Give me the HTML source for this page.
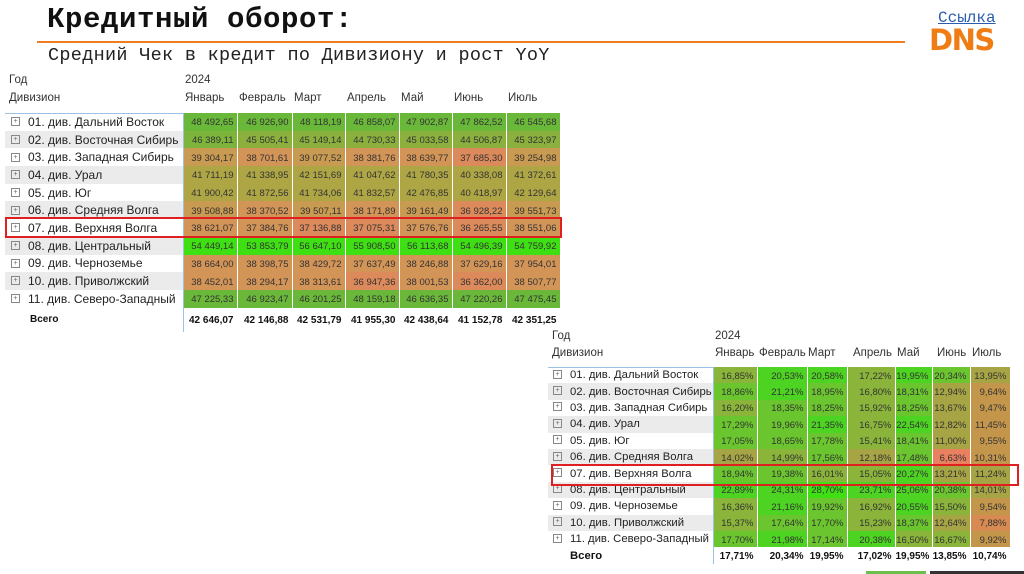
<!DOCTYPE html>
<html><head><meta charset="utf-8">
<style>
body{margin:0;width:1024px;height:574px;background:#fff;position:relative;overflow:hidden;font-family:"Liberation Sans","DejaVu Sans",sans-serif;color:#222}
.abs{position:absolute}
.t1{font-family:"Liberation Mono",monospace;font-weight:bold;font-size:29px;left:47px;top:3px;color:#111;letter-spacing:0.6px}
.t2{font-family:"Liberation Mono",monospace;font-size:18.5px;left:48px;top:45px;color:#222;letter-spacing:0.3px}
.line{left:37px;top:41px;width:868px;height:2px;background:#ef7d22}
.link{font-family:"Liberation Mono",monospace;font-size:16px;left:938px;top:9px;color:#2a5db0;text-decoration:underline}
.dns{left:929px;top:25px;font-weight:900;font-size:29px;color:#f07c14;letter-spacing:-1.5px;font-family:"DejaVu Sans",sans-serif;line-height:30px}
table{border-collapse:collapse;position:absolute;table-layout:fixed}
td{padding:0;white-space:nowrap;overflow:hidden}
.h td{font-size:11.5px;color:#333}
.lab{font-size:12px;color:#222;border-right:1px solid #9cc3e6}
.small .lab{font-size:11.3px}
.box{display:inline-block;width:7px;height:7px;border:1px solid #888;margin:0 8px 0 6px;vertical-align:middle;position:relative;top:-1px;font-size:7px;line-height:7px;text-align:center;color:#666}
.small .box{margin:0 8px 0 5px}
.g td.lab{background:#ebebeb}
.v{font-size:9.5px;color:#333;text-align:right;padding-right:3px;border-right:1px solid rgba(255,255,255,.25);padding-top:2px}
.tot td{font-weight:bold;font-size:10px;color:#111}
.A{background:#6ab83a}.B{background:#7db43c}.C{background:#8bb03e}.D{background:#aea645}.E{background:#c89a52}.F{background:#d39457}.G{background:#dc8a5b}.H{background:#3ee014}
.p1{background:#4dd322}.p2{background:#6bc52e}.p3{background:#8ab43a}.p4{background:#a6a444}.p5{background:#c3964b}.p6{background:#d78b52}.p7{background:#e9805f}
.red{border:2px solid #e02020;position:absolute}
</style></head><body>
<div class="abs t1">Кредитный оборот:</div>
<div class="abs line"></div>
<div class="abs t2">Средний Чек в кредит по Дивизиону и рост YoY</div>
<div class="abs link">Ссылка</div>
<div class="abs dns">DNS</div>

<table style="left:5px;top:71px;width:555px">
<colgroup><col style="width:178px"><col style="width:54px"><col style="width:55px"><col style="width:53px"><col style="width:54px"><col style="width:53px"><col style="width:54px"><col style="width:54px"></colgroup>
<tr class="h" style="height:18px"><td style="padding-left:4px">Год</td><td style="padding-left:2px">2024</td><td></td><td></td><td></td><td></td><td></td><td></td></tr>
<tr class="h" style="height:18px"><td style="padding-left:4px">Дивизион</td><td style="padding-left:2px">Январь</td><td style="padding-left:2px">Февраль</td><td style="padding-left:2px">Март</td><td style="padding-left:2px">Апрель</td><td style="padding-left:2px">Май</td><td style="padding-left:2px">Июнь</td><td style="padding-left:2px">Июль</td></tr>
<tr style="height:6px"><td style="border-bottom:1px solid #9cc3e6"></td><td colspan="7"></td></tr>
<tr style="height:17.7px"><td class="lab"><span class="box">+</span>01. див. Дальний Восток</td><td class="v A">48 492,65</td><td class="v A">46 926,90</td><td class="v A">48 118,19</td><td class="v A">46 858,07</td><td class="v A">47 902,87</td><td class="v A">47 862,52</td><td class="v A">46 545,68</td></tr>
<tr class="g" style="height:17.7px"><td class="lab"><span class="box">+</span>02. див. Восточная Сибирь</td><td class="v B">46 389,11</td><td class="v C">45 505,41</td><td class="v C">45 149,14</td><td class="v C">44 730,33</td><td class="v C">45 033,58</td><td class="v C">44 506,87</td><td class="v C">45 323,97</td></tr>
<tr style="height:17.7px"><td class="lab"><span class="box">+</span>03. див. Западная Сибирь</td><td class="v E">39 304,17</td><td class="v F">38 701,61</td><td class="v E">39 077,52</td><td class="v F">38 381,76</td><td class="v F">38 639,77</td><td class="v G">37 685,30</td><td class="v E">39 254,98</td></tr>
<tr class="g" style="height:17.7px"><td class="lab"><span class="box">+</span>04. див. Урал</td><td class="v D">41 711,19</td><td class="v D">41 338,95</td><td class="v D">42 151,69</td><td class="v D">41 047,62</td><td class="v D">41 780,35</td><td class="v D">40 338,08</td><td class="v D">41 372,61</td></tr>
<tr style="height:17.7px"><td class="lab"><span class="box">+</span>05. див. Юг</td><td class="v D">41 900,42</td><td class="v D">41 872,56</td><td class="v D">41 734,06</td><td class="v D">41 832,57</td><td class="v D">42 476,85</td><td class="v D">40 418,97</td><td class="v D">42 129,64</td></tr>
<tr class="g" style="height:17.7px"><td class="lab"><span class="box">+</span>06. див. Средняя Волга</td><td class="v E">39 508,88</td><td class="v F">38 370,52</td><td class="v E">39 507,11</td><td class="v F">38 171,89</td><td class="v E">39 161,49</td><td class="v G">36 928,22</td><td class="v E">39 551,73</td></tr>
<tr style="height:17.7px"><td class="lab"><span class="box">+</span>07. див. Верхняя Волга</td><td class="v F">38 621,07</td><td class="v F">37 384,76</td><td class="v G">37 136,88</td><td class="v G">37 075,31</td><td class="v F">37 576,76</td><td class="v G">36 265,55</td><td class="v F">38 551,06</td></tr>
<tr class="g" style="height:17.7px"><td class="lab"><span class="box">+</span>08. див. Центральный</td><td class="v H">54 449,14</td><td class="v H">53 853,79</td><td class="v H">56 647,10</td><td class="v H">55 908,50</td><td class="v H">56 113,68</td><td class="v H">54 496,39</td><td class="v H">54 759,92</td></tr>
<tr style="height:17.7px"><td class="lab"><span class="box">+</span>09. див. Черноземье</td><td class="v F">38 664,00</td><td class="v F">38 398,75</td><td class="v F">38 429,72</td><td class="v F">37 637,49</td><td class="v F">38 246,88</td><td class="v F">37 629,16</td><td class="v F">37 954,01</td></tr>
<tr class="g" style="height:17.7px"><td class="lab"><span class="box">+</span>10. див. Приволжский</td><td class="v F">38 452,01</td><td class="v F">38 294,17</td><td class="v F">38 313,61</td><td class="v G">36 947,36</td><td class="v F">38 001,53</td><td class="v G">36 362,00</td><td class="v F">38 507,77</td></tr>
<tr style="height:17.7px"><td class="lab"><span class="box">+</span>11. див. Северо-Западный</td><td class="v A">47 225,33</td><td class="v A">46 923,47</td><td class="v A">46 201,25</td><td class="v A">48 159,18</td><td class="v A">46 636,35</td><td class="v A">47 220,26</td><td class="v A">47 475,45</td></tr>
<tr class="tot" style="height:24px"><td class="lab" style="padding-left:25px;font-weight:bold">Всего</td><td class="v" style="color:#111">42 646,07</td><td class="v" style="color:#111">42 146,88</td><td class="v" style="color:#111">42 531,79</td><td class="v" style="color:#111">41 955,30</td><td class="v" style="color:#111">42 438,64</td><td class="v" style="color:#111">41 152,78</td><td class="v" style="color:#111">42 351,25</td></tr>
</table>
<div class="red" style="left:5px;top:217px;width:553px;height:17px"></div>

<table class="small" style="left:548px;top:327px;width:462px">
<colgroup><col style="width:165px"><col style="width:44px"><col style="width:50px"><col style="width:40px"><col style="width:48px"><col style="width:37px"><col style="width:38px"><col style="width:40px"></colgroup>
<tr class="h" style="height:17px"><td style="padding-left:4px">Год</td><td style="padding-left:2px">2024</td><td></td><td></td><td></td><td></td><td></td><td></td></tr>
<tr class="h" style="height:17px"><td style="padding-left:4px">Дивизион</td><td style="padding-left:2px">Январь</td><td style="padding-left:2px">Февраль</td><td style="padding-left:1px">Март</td><td style="padding-left:6px">Апрель</td><td style="padding-left:2px">Май</td><td style="padding-left:5px">Июнь</td><td style="padding-left:2px">Июль</td></tr>
<tr style="height:6px"><td style="border-bottom:1px solid #9cc3e6"></td><td colspan="7"></td></tr>
<tr style="height:16.4px"><td class="lab"><span class="box">+</span>01. див. Дальний Восток</td><td class="v p3">16,85%</td><td class="v p1">20,53%</td><td class="v p1">20,58%</td><td class="v p3">17,22%</td><td class="v p1">19,95%</td><td class="v p2">20,34%</td><td class="v p4">13,95%</td></tr>
<tr class="g" style="height:16.4px"><td class="lab"><span class="box">+</span>02. див. Восточная Сибирь</td><td class="v p2">18,86%</td><td class="v p1">21,21%</td><td class="v p2">18,95%</td><td class="v p3">16,80%</td><td class="v p2">18,31%</td><td class="v p4">12,94%</td><td class="v p5">9,64%</td></tr>
<tr style="height:16.4px"><td class="lab"><span class="box">+</span>03. див. Западная Сибирь</td><td class="v p3">16,20%</td><td class="v p2">18,35%</td><td class="v p2">18,25%</td><td class="v p3">15,92%</td><td class="v p2">18,25%</td><td class="v p4">13,67%</td><td class="v p5">9,47%</td></tr>
<tr class="g" style="height:16.4px"><td class="lab"><span class="box">+</span>04. див. Урал</td><td class="v p2">17,29%</td><td class="v p2">19,96%</td><td class="v p1">21,35%</td><td class="v p3">16,75%</td><td class="v p1">22,54%</td><td class="v p4">12,82%</td><td class="v p5">11,45%</td></tr>
<tr style="height:16.4px"><td class="lab"><span class="box">+</span>05. див. Юг</td><td class="v p2">17,05%</td><td class="v p2">18,65%</td><td class="v p2">17,78%</td><td class="v p3">15,41%</td><td class="v p2">18,41%</td><td class="v p4">11,00%</td><td class="v p5">9,55%</td></tr>
<tr class="g" style="height:16.4px"><td class="lab"><span class="box">+</span>06. див. Средняя Волга</td><td class="v p4">14,02%</td><td class="v p3">14,99%</td><td class="v p2">17,56%</td><td class="v p4">12,18%</td><td class="v p2">17,48%</td><td class="v p7">6,63%</td><td class="v p5">10,31%</td></tr>
<tr style="height:16.4px"><td class="lab"><span class="box">+</span>07. див. Верхняя Волга</td><td class="v p2">18,94%</td><td class="v p2">19,38%</td><td class="v p3">16,01%</td><td class="v p3">15,05%</td><td class="v p1">20,27%</td><td class="v p4">13,21%</td><td class="v p4">11,24%</td></tr>
<tr class="g" style="height:16.4px"><td class="lab"><span class="box">+</span>08. див. Центральный</td><td class="v p1">22,89%</td><td class="v p1">24,31%</td><td class="v p1" style="background:#3ee014">28,70%</td><td class="v p1">23,71%</td><td class="v p1">25,06%</td><td class="v p2">20,38%</td><td class="v p4">14,01%</td></tr>
<tr style="height:16.4px"><td class="lab"><span class="box">+</span>09. див. Черноземье</td><td class="v p3">16,36%</td><td class="v p1">21,16%</td><td class="v p2">19,92%</td><td class="v p3">16,92%</td><td class="v p1">20,55%</td><td class="v p3">15,50%</td><td class="v p5">9,54%</td></tr>
<tr class="g" style="height:16.4px"><td class="lab"><span class="box">+</span>10. див. Приволжский</td><td class="v p3">15,37%</td><td class="v p2">17,64%</td><td class="v p2">17,70%</td><td class="v p3">15,23%</td><td class="v p2">18,37%</td><td class="v p4">12,64%</td><td class="v p6">7,88%</td></tr>
<tr style="height:16.4px"><td class="lab"><span class="box">+</span>11. див. Северо-Западный</td><td class="v p2">17,70%</td><td class="v p1">21,98%</td><td class="v p2">17,14%</td><td class="v p1">20,38%</td><td class="v p3">16,50%</td><td class="v p3">16,67%</td><td class="v p5">9,92%</td></tr>
<tr class="tot" style="height:17px"><td class="lab" style="padding-left:22px;font-weight:bold">Всего</td><td class="v" style="color:#111">17,71%</td><td class="v" style="color:#111">20,34%</td><td class="v" style="color:#111">19,95%</td><td class="v" style="color:#111">17,02%</td><td class="v" style="color:#111">19,95%</td><td class="v" style="color:#111">13,85%</td><td class="v" style="color:#111">10,74%</td></tr>
</table>
<div class="red" style="left:551px;top:464px;width:464px;height:18px"></div>
<div class="abs" style="left:866px;top:571px;width:60px;height:3px;background:#6cbf4a"></div>
<div class="abs" style="left:930px;top:571px;width:94px;height:3px;background:#333"></div>
</body></html>
